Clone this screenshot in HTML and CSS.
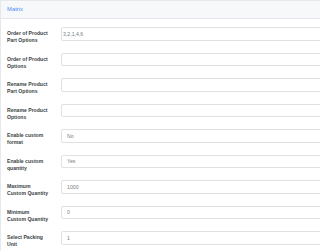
FILE: index.html
```html
<!DOCTYPE html>
<html>
<head>
<meta charset="utf-8">
<link rel="stylesheet" href="styles.css">
</head>
<body>
<div class="card">
  <div class="card-header">Matrix</div>
  <div class="card-body">
    <div class="row"><label class="lbl">Order of Product<br>Part Options</label><input class="field field-tight" type="text" value="3,2,1,4,6"></div>
    <div class="row"><label class="lbl">Order of Product<br>Options</label><input class="field" type="text" value=""></div>
    <div class="row"><label class="lbl">Rename Product<br>Part Options</label><input class="field" type="text" value=""></div>
    <div class="row"><label class="lbl">Rename Product<br>Options</label><input class="field" type="text" value=""></div>
    <div class="row"><label class="lbl">Enable custom<br>format</label><input class="field" type="text" value="No"></div>
    <div class="row"><label class="lbl">Enable custom<br>quantity</label><input class="field" type="text" value="Yes"></div>
    <div class="row"><label class="lbl">Maximum<br>Custom Quantity</label><input class="field" type="text" value="1000"></div>
    <div class="row"><label class="lbl">Minimum<br>Custom Quantity</label><input class="field" type="text" value="0"></div>
    <div class="row"><label class="lbl">Select Packing<br>Unit</label><input class="field" type="text" value="1"></div>
  </div>
</div>
</body>
</html>
```
FILE: styles.css
```css
html, body {
  margin: 0;
  padding: 0;
  overflow: hidden;
  background: #ffffff;
  font-family: "Liberation Sans", Arial, sans-serif;
}
.card {
  width: 100%;
  box-sizing: border-box;
  overflow: hidden;
  border-top: 1px solid #e6e8eb;
  border-left: 1px solid #e6e8eb;
  background: #ffffff;
}
.card-header {
  height: 17px;
  line-height: 17px;
  padding: 0 6px;
  background: #f7f8fa;
  border-bottom: 1px solid #e4e6e9;
  color: #4a8cf6;
  font-size: 5.9px;
}
.card-body {
  padding: 8px 0 0 6px;
}
.row {
  display: flex;
  align-items: flex-start;
  height: 13.5px;
  margin-bottom: 12px;
}
.lbl {
  flex: 0 0 54px;
  box-sizing: border-box;
  padding-top: 3.1px;
  font-size: 5.1px;
  line-height: 7.3px;
  font-weight: bold;
  color: #3a3f44;
}
.field {
  flex: 1;
  min-width: 0;
  box-sizing: border-box;
  height: 13.5px;
  margin: 0 -4px 0 0;
  padding: 0 5px;
  border: 1px solid #dfe1e4;
  border-radius: 2px;
  background: #ffffff;
  font-family: "Liberation Sans", Arial, sans-serif;
  font-size: 5.2px;
  color: #7a7d80;
  outline: none;
}
.field-tight {
  padding-left: 1px;
}
```
